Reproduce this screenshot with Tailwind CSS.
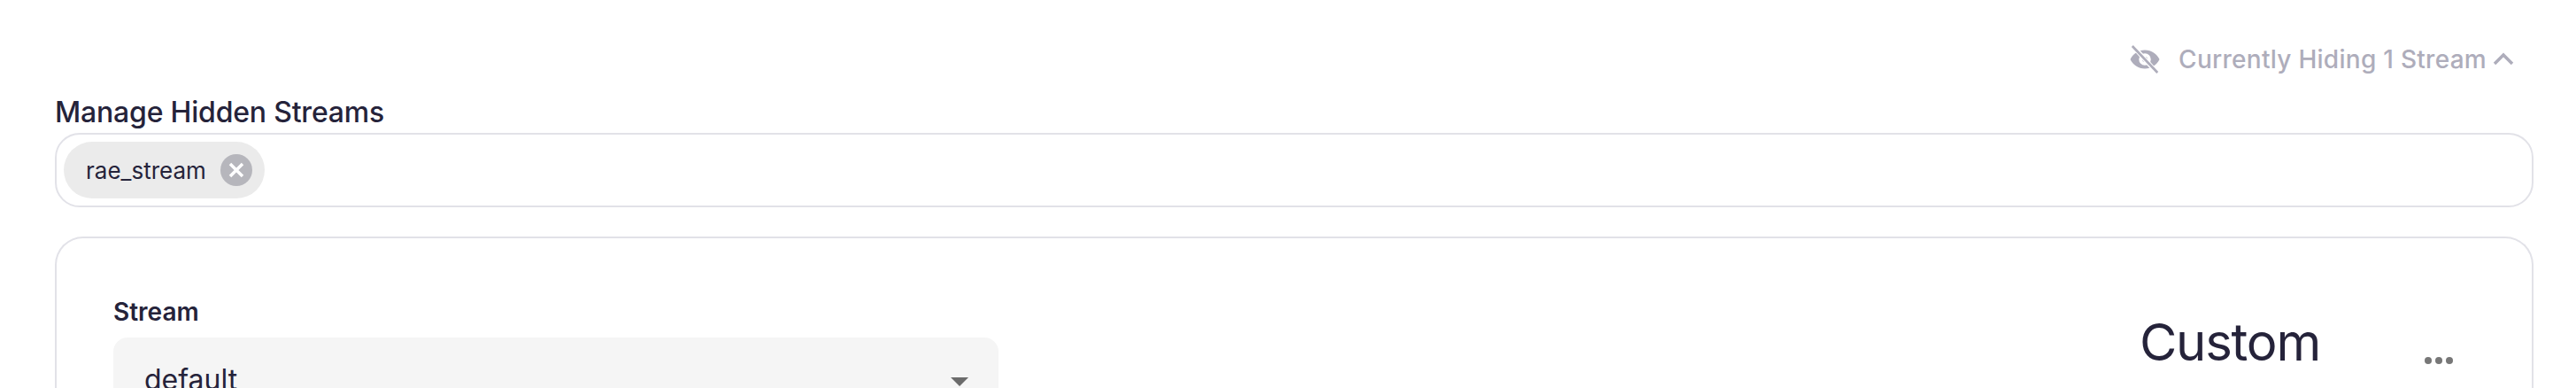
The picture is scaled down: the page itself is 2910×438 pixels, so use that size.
<!DOCTYPE html>
<html lang="en">

<head>
    <meta charset="UTF-8">
    <script src="https://cdn.jsdelivr.net/npm/@tailwindcss/browser@4"></script>
    <title>Manage Hidden Streams</title>
</head>

<body class="bg-white h-[438px] overflow-hidden font-['Inter',sans-serif] text-[#25233a]">
    <div class="pl-[62px] pr-[48px] pt-[48px]">
        <!-- hidden streams toggle -->
        <div class="flex justify-end items-center h-[38px] pr-[22px] text-[#aeadbb] text-[28px] font-medium tracking-[0.28px]">
            <svg class="w-[36px] h-[36px] mr-[20px]" viewBox="0 0 24 24" fill="currentColor">
                <path d="M12 5C7 5 3 8 1 12c2 4 6 7 11 7s9-3 11-7c-2-4-6-7-11-7zm0 11.500a4.500 4.500 0 1 1 0-9 4.500 4.500 0 0 1 0 9z" />
                <circle cx="12" cy="12" r="2" />
                <path d="M3 2 21 22" stroke="white" stroke-width="3.500" />
                <path d="M2.500 2 21.500 22" stroke="currentColor" stroke-width="1.800" />
            </svg>
            <span>Currently Hiding 1 Stream</span>
            <svg class="w-[24px] h-[16px] ml-[7px]" viewBox="0 0 24 16" fill="none" stroke="currentColor" stroke-width="3.500">
                <path d="M2 13 12 3l10 10" />
            </svg>
        </div>

        <h2 class="mt-[21px] text-[32px] leading-[40px] font-medium tracking-[-0.2px]">Manage Hidden Streams</h2>

        <!-- tag input -->
        <div class="mt-[3px] flex items-center h-[84px] px-[8px] border-2 border-[#e2e2e8] rounded-[28px]">
            <div class="flex items-center h-[64px] pl-[25px] pr-[14px] gap-[16px] bg-[#ebebeb] rounded-full">
                <span class="text-[26px]">rae_stream</span>
                <span class="flex items-center justify-center w-[36px] h-[36px] rounded-full bg-[#b6b6bc]">
                    <svg class="w-[18px] h-[18px]" viewBox="0 0 18 18" stroke="white" stroke-width="3.500">
                        <path d="M2 2 16 16M16 2 2 16" />
                    </svg>
                </span>
            </div>
        </div>

        <!-- stream card -->
        <div class="mt-[33px] h-[172px] overflow-hidden flex justify-between border-2 border-[#e2e2e8] border-b-0 rounded-t-[32px] pl-[64px] pr-[89px] pt-[66px]">
            <div class="w-[1000px]">
                <label class="block text-[28px] leading-[34px] font-semibold">Stream</label>
                <div class="mt-[12px] flex justify-between h-[120px] pl-[35px] pr-[34px] pt-[28px] bg-[#f5f5f5] rounded-[16px]">
                    <span class="text-[32px] leading-[40px]">default</span>
                    <span class="mt-[17px] w-0 h-0 border-x-[10px] border-x-transparent border-t-[10px] border-t-[#6b6b6b]"></span>
                </div>
            </div>
            <div class="flex items-start pt-[15px]">
                <span class="text-[58px] leading-[72px] tracking-[-1.2px]">Custom</span>
                <div class="ml-[118px] mt-[53px] flex gap-[4px]">
                    <span class="w-[8px] h-[8px] rounded-full bg-[#777777]"></span>
                    <span class="w-[8px] h-[8px] rounded-full bg-[#777777]"></span>
                    <span class="w-[8px] h-[8px] rounded-full bg-[#777777]"></span>
                </div>
            </div>
        </div>
    </div>
</body>

</html>
